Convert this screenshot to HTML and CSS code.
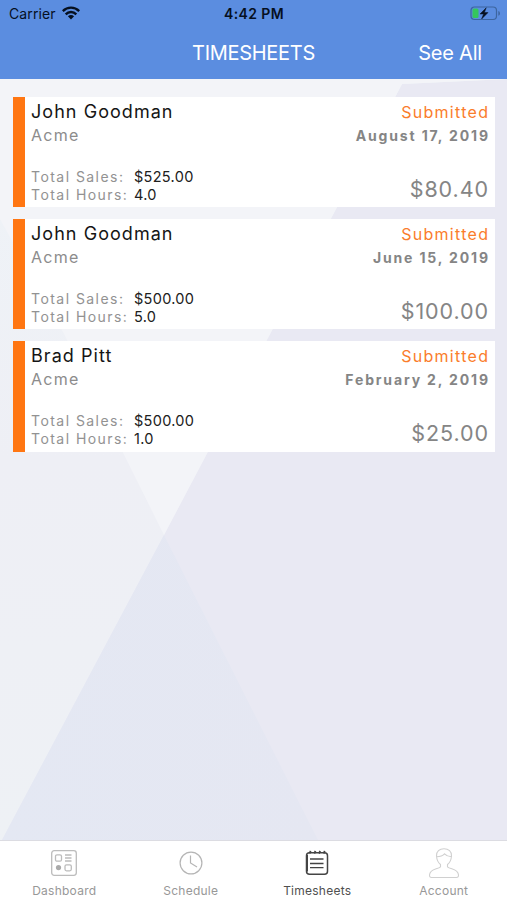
FILE: index.html
```html
<!DOCTYPE html>
<html lang="en">
<head>
<meta charset="utf-8">
<title>Timesheets</title>
<link rel="stylesheet" href="styles.css">
</head>
<body>
<div class="app">
  <header class="header">
    <div class="status">
      <div class="carrier"><span>Carrier</span>
        <svg class="wifi" width="18" height="14" viewBox="0 0 18 14"><g fill="none" stroke="#06101f" stroke-width="2.4"><path d="M.8 5.1C5.5.5 12.500.5 17.200 5.100"/><path d="M3.700 8.300C6.700 5.300 11.300 5.300 14.300 8.300"/></g><path d="M9 13.500 5.900 10.200Q9 7.600 12.100 10.200Z" fill="#06101f"/></svg>
      </div>
      <span class="time">4:42 PM</span>
      <svg class="battery" width="31" height="15" viewBox="0 0 31 15"><rect x="1" y="1" width="25.500" height="12.500" rx="3.500" fill="none" stroke="#3d659f" stroke-width="1.200"/><rect x="2.500" y="2.500" width="6" height="9.500" rx="1.500" fill="#35c75c"/><path d="M28.300 5v4.800Q30 9.300 30 7.400T28.300 5" fill="#3d659f"/><path d="M16.200 1.800 10 8h3.600l-2 5L18 6.600h-3.600z" fill="#06101f" stroke="#06101f" stroke-width=".5"/></svg>
    </div>
    <div class="nav"><span></span><h1>TIMESHEETS</h1><a class="see-all">See All</a></div>
  </header>
  <main class="content">
    <svg class="backdrop" viewBox="0 79 507 761" preserveAspectRatio="none">
      <defs>
        <linearGradient id="left" x1="0" y1="0" x2="0" y2="1"><stop offset="0" stop-color="#eff4f8"/><stop offset=".5" stop-color="#eeeff5"/><stop offset="1" stop-color="#eef1f5"/></linearGradient>
        <linearGradient id="low" x1="0" y1="0" x2="1" y2="0"><stop offset="0" stop-color="#e4e8f3"/><stop offset="1" stop-color="#e5e7f2"/></linearGradient>
      </defs>
      <path d="M0 79H507V840H0z" fill="#e9e9f3"/>
      <path d="M0 79H507L402 84 164 535 2 840H0z" fill="url(#left)"/>
      <path d="M0 79H507L402 84 164 535 63 332 0 219z" fill="#f3f4f8"/>
      <path d="M164 535 318 840H2z" fill="url(#low)"/>
    </svg>
    <article class="card">
      <div class="left"><h2>John Goodman</h2><p class="company">Acme</p>
        <dl><dt>Total Sales:</dt><dd>$525.00</dd><dt>Total Hours:</dt><dd>4.0</dd></dl></div>
      <div class="right"><p class="state">Submitted</p><p class="date">August 17, 2019</p><p class="amount">$80.40</p></div>
    </article>
    <article class="card">
      <div class="left"><h2>John Goodman</h2><p class="company">Acme</p>
        <dl><dt>Total Sales:</dt><dd>$500.00</dd><dt>Total Hours:</dt><dd>5.0</dd></dl></div>
      <div class="right"><p class="state">Submitted</p><p class="date">June 15, 2019</p><p class="amount">$100.00</p></div>
    </article>
    <article class="card">
      <div class="left"><h2>Brad Pitt</h2><p class="company">Acme</p>
        <dl><dt>Total Sales:</dt><dd>$500.00</dd><dt>Total Hours:</dt><dd>1.0</dd></dl></div>
      <div class="right"><p class="state">Submitted</p><p class="date">February 2, 2019</p><p class="amount">$25.00</p></div>
    </article>
  </main>
  <nav class="tabs">
    <a class="tab"><svg width="32" height="32" viewBox="0 0 32 32" fill="none" stroke="#bcbcbc" stroke-width="1.300"><rect x="3.700" y="3.700" width="24.600" height="24.600" rx="2.500"/><rect x="7.500" y="7.800" width="6" height="6.400" rx="1.500"/><rect x="17" y="17.800" width="6.300" height="6" rx="1.500"/><path d="M17 8h6.500M17 11h6.500M17 14h6.500"/><circle cx="10.500" cy="20.600" r="2.600" fill="#aaa" stroke="none"/></svg><span>Dashboard</span></a>
    <a class="tab"><svg width="32" height="32" viewBox="0 0 32 32" fill="none" stroke="#b5b5b5" stroke-width="1.200"><circle cx="16" cy="16" r="10.900"/><path d="M15.500 8.500V16l6.500 4"/></svg><span>Schedule</span></a>
    <a class="tab active"><svg width="32" height="32" viewBox="0 0 32 32" fill="none" stroke="#444" stroke-width="1.500"><rect x="5.500" y="5.700" width="21" height="21.500" rx="3"/><path d="M6 8v16.500" stroke-width="2"/><path d="M9 12h13.500M9 16.500h13.500M9 20.700h13.500" stroke-width="1.300"/><path d="M8.500 6.500l1.200-2.500M13.300 6.500l1.200-2.500M18 6.500l1.200-2.500M22.600 6.500l1.200-2.500" stroke-width="1.800"/></svg><span>Timesheets</span></a>
    <a class="tab"><svg width="32" height="32" viewBox="0 0 32 32" fill="none" stroke="#d0d0d0" stroke-width="1.100"><path d="M12.500 17.500C9.700 15.500 8.800 12.500 8.500 9 8.200 4.500 11.500 1.800 16 1.800S23.800 4.500 23.500 9c-.3 3.500-1.200 6.500-4 8.500v2.300c2.800 2.800 10.500 1.700 11 8.200.1 1.800-.7 2.500-2 2.500h-25c-1.300 0-2.100-.7-2-2.500.5-6.500 8.200-5.400 11-8.200zM8.600 9.800Q14 9.500 16.500 6.800 19 9.500 23.500 9.800"/></svg><span>Account</span></a>
  </nav>
</div>
</body>
</html>
```
FILE: styles.css
```css
* { box-sizing: border-box; margin: 0; padding: 0; }
body { font-family: Inter, "Liberation Sans", sans-serif; background: #fff; }
.app { width: 507px; height: 900px; display: flex; flex-direction: column; overflow: hidden; }
.header { height: 79px; background: #5b8de0; }
.status { height: 27px; display: grid; grid-template-columns: 1fr auto 1fr; align-items: center; padding: 0 6px 0 9px; color: #06101f; }
.carrier { display: flex; align-items: center; gap: 6px; font-size: 14px; letter-spacing: 0.1px; }
.wifi { margin-top: -2px; }
.time { font-size: 14px; font-weight: 600; letter-spacing: 0.400px; margin-right: 2px; }
.battery { justify-self: end; }
.nav { height: 52px; display: grid; grid-template-columns: 1fr auto 1fr; align-items: center; padding: 0 25px 1px; color: #fff; }
.nav h1 { font-size: 20px; font-weight: 400; letter-spacing: -0.300px; }
.see-all { justify-self: end; font-size: 20px; letter-spacing: -0.2px; }
.content { position: relative; flex: 1; display: flex; flex-direction: column; gap: 12px; padding: 18px 12px 0 13px; }
.backdrop { position: absolute; inset: 0; width: 100%; height: 100%; }
.card { position: relative; height: 110.200px; display: flex; justify-content: space-between; background: #fff; border-left: 12px solid #ff7612; padding: 2.500px 7px 0 6px; }
.card h2 { font-size: 18px; line-height: 23px; font-weight: 400; letter-spacing: 1.050px; color: #151515; }
.company { font-size: 16px; line-height: 24px; letter-spacing: 1.300px; color: #8c8c8c; }
dl { display: grid; grid-template-columns: 103px auto; margin-top: 21.500px; font-size: 14px; line-height: 17.600px; }
dt { letter-spacing: 1.450px; color: #929292; white-space: nowrap; }
dd { color: #202020; font-size: 14.500px; letter-spacing: 0.300px; }
.right { text-align: right; }
.state { font-size: 16px; line-height: 25px; letter-spacing: 1.300px; color: #fa7d2c; margin-right: -1.300px; }
.date { font-size: 14px; line-height: 22px; font-weight: 700; letter-spacing: 1.850px; color: #858585; margin-right: -1.850px; }
.amount { font-size: 21.500px; line-height: 28px; letter-spacing: 0.900px; color: #858585; margin: 28.500px -0.900px 0 0; }
.tabs { height: 60px; display: grid; grid-template-columns: repeat(4, 126.500px); padding-left: 1px; background: #fff; border-top: 1px solid #dcdce2; }
.tab { display: flex; flex-direction: column; align-items: center; padding-top: 6px; font-size: 12px; line-height: 15px; letter-spacing: 0.250px; color: #989898; }
.tab span { margin-top: 4px; }
.active { color: #505050; }
```
